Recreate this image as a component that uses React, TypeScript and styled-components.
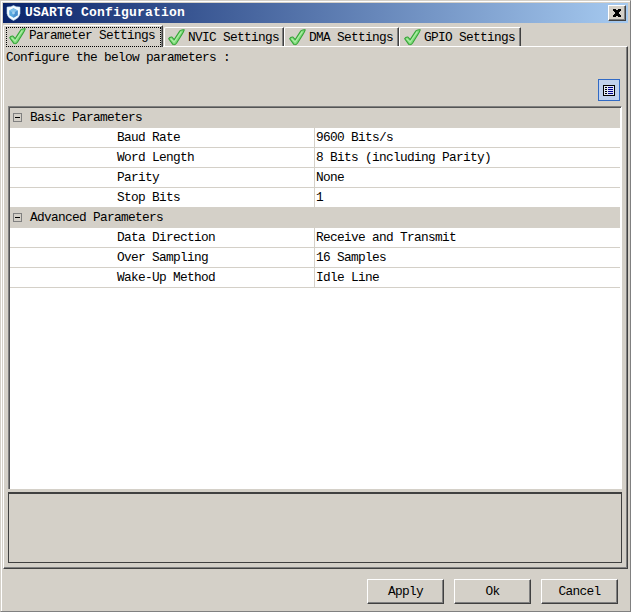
import React from 'react';
import styled, { createGlobalStyle } from 'styled-components';

const face = '#d4d0c8';

const GlobalStyle = createGlobalStyle`
  * { box-sizing: border-box; }
  body {
    margin: 0;
    background: ${face};
    color: #000;
    font-family: 'Liberation Mono', monospace;
    font-size: 12.8px;
    letter-spacing: -0.68px;
    line-height: 20px;
    white-space: pre;
  }
`;

const Window = styled.div`
  display: flex;
  flex-direction: column;
  width: 631px;
  height: 612px;
  background: ${face};
  border: 1px solid;
  border-color: ${face} #808080 #808080 ${face};
  box-shadow: inset 1px 1px 0 #fff;
  padding: 2px;
`;

const TitleBar = styled.header`
  display: flex;
  align-items: center;
  height: 20px;
  flex: none;
  padding: 0 2px 0 3px;
  background: linear-gradient(to right, #0a246a, #a6caf0);
`;

const Title = styled.h1`
  flex: 1;
  margin: 0 0 0 4px;
  color: #fff;
  font-size: 13px;
  line-height: 20px;
  letter-spacing: 0.2px;
  font-weight: bold;
`;

const CloseButton = styled.button`
  display: grid;
  place-items: center;
  width: 18px;
  height: 16px;
  padding: 0 1px 1px 0;
  background: ${face};
  border: 1px solid;
  border-color: #fff #404040 #404040 #fff;
  box-shadow: inset -1px -1px 0 #808080;
`;

const TabStrip = styled.nav`
  display: flex;
  align-items: flex-end;
  height: 23px;
  flex: none;
`;

const Tab = styled.button<{ $width: number; $inset: number; $selected?: boolean }>`
  display: flex;
  align-items: center;
  flex: none;
  position: relative;
  z-index: ${(p) => (p.$selected ? 1 : 0)};
  width: ${(p) => p.$width}px;
  height: ${(p) => (p.$selected ? 22 : 19)}px;
  margin: 0 ${(p) => (p.$selected ? 1 : 0)}px ${(p) => (p.$selected ? -1 : 0)}px 0;
  padding: ${(p) => (p.$selected ? 0 : 1)}px 0 0 ${(p) => p.$inset}px;
  background: ${face};
  border: 1px solid;
  border-color: #fff #404040 transparent #fff;
  border-bottom: 0;
  border-radius: 2px 1px 0 0;
  box-shadow: inset -1px 0 0 #808080;
  color: #000;
  font: inherit;
  letter-spacing: inherit;
`;

const TabContent = styled.span<{ $focused?: boolean }>`
  display: flex;
  align-items: center;
  gap: 3px;
  height: ${(p) => (p.$focused ? 20 : 18)}px;
  width: ${(p) => (p.$focused ? '155px' : 'auto')};
  padding: ${(p) => (p.$focused ? '0 0 1px 2px' : '0')};
  border: ${(p) => (p.$focused ? '1px dotted #000' : '0')};
  line-height: 18px;
`;

const Panel = styled.main`
  display: flex;
  flex-direction: column;
  width: 625px;
  height: 523px;
  flex: none;
  padding: 1px 4px 4px;
  border: 1px solid;
  border-color: #fff #404040 #404040 #fff;
  box-shadow: inset -1px -1px 0 #808080;
`;

const Intro = styled.p`
  height: 21px;
  margin: 0 0 0 -2px;
  line-height: 20px;
`;

const Toolbar = styled.div`
  display: flex;
  justify-content: flex-end;
  height: 37px;
  padding: 10px 3px 0 0;
`;

const ToolButton = styled.button`
  display: grid;
  place-items: center;
  width: 22px;
  height: 22px;
  padding: 0;
  background: #c1d2ee;
  border: 1px solid #316ac5;
`;

const TableFrame = styled.section`
  width: 614px;
  height: 383px;
  flex: none;
  background: #fff;
  border: solid #fff;
  border-width: 1px 1px 0 1px;
  border-top-color: #808080;
  border-left-color: #808080;
  box-shadow: inset 1px 1px 0 #545454;
  padding: 1px 1px 0 1px;
`;

const GroupRow = styled.div`
  display: flex;
  align-items: center;
  gap: 8px;
  height: 20px;
  padding-left: 3px;
  background: ${face};
`;

const Toggle = styled.span`
  display: grid;
  place-items: center;
  width: 9px;
  height: 9px;
  margin-top: -1px;
  border: 1px solid #808080;

  &::before {
    content: '';
    width: 5px;
    height: 1px;
    background: #000;
  }
`;

const ParameterRow = styled.div`
  display: grid;
  grid-template-columns: 305px 1fr;
  height: 20px;
  border-bottom: 1px solid ${face};
`;

const Name = styled.span`
  padding-left: 107px;
  border-right: 1px solid ${face};
`;

const Value = styled.span`
  padding-left: 1px;
`;

const Description = styled.section`
  width: 614px;
  height: 71px;
  flex: none;
  margin-top: 3px;
  border: 1px solid #404040;
  border-top-width: 2px;
`;

const Footer = styled.footer`
  display: flex;
  justify-content: flex-end;
  gap: 10px;
  padding: 10px 10px 0 0;
`;

const PushButton = styled.button`
  width: 77px;
  height: 25px;
  padding: 1px 0 0;
  background: ${face};
  border: 1px solid;
  border-color: #fff #404040 #404040 #fff;
  box-shadow: inset -1px -1px 0 #808080;
  color: #000;
  font: inherit;
  letter-spacing: inherit;
`;

const CheckIcon = () => (
  <svg width="17" height="17" viewBox="0 0 17 17">
    <path
      d="M.7 9.8 Q1.6 7.7 3.9 8 L6.2 10.6 L11.6 2.2 Q13.2 .5 16.2 .9 Q15.5 3.2 14.2 5 L8.6 14 Q6.8 16.6 4.8 15.4 Z"
      fill="#7edb7a"
      stroke="#35a337"
      strokeWidth="1.1"
      strokeLinejoin="round"
    />
    <path d="M2.6 9.6 L6 13.2 L13.3 2.6" fill="none" stroke="#b0eea8" strokeWidth="1.1" />
  </svg>
);

const AppIcon = () => (
  <svg width="15" height="16" viewBox="0 0 15 16">
    <path d="M7.5 .6 Q10 2.2 14 2.1 V8.6 Q13.4 13 7.5 15.6 Q1.6 13 1 8.6 V2.1 Q5 2.2 7.5 .6Z" fill="#f4faff" stroke="#b9dcf2" strokeWidth=".6" />
    <path d="M7.5 3.2 L11.7 5.5 V10.2 L7.5 12.7 L3.3 10.2 V5.5Z" fill="#58a9df" />
    <path d="M7.5 3.2 L11.7 5.5 L7.5 7.9 L3.3 5.5Z" fill="#83c1ea" />
    <path d="M7.5 7.9 L11.7 5.5 V10.2 L7.5 12.7Z" fill="#4a90cf" />
    <circle cx="7.5" cy="8" r="1.4" fill="#a8d4f2" />
  </svg>
);

const CloseIcon = () => (
  <svg width="8" height="8" viewBox="0 0 8 8" shapeRendering="crispEdges">
    <path d="M0 0h3v1h2V0h3v2H7v1H6v2h1v1h1v2H5V7H3v1H0V6h1V5h1V3H1V2H0z" />
  </svg>
);

const ListIcon = () => (
  <svg width="12" height="11" viewBox="0 0 12 11" shapeRendering="crispEdges">
    <rect x=".5" y=".5" width="11" height="10" fill="#e0e8f8" stroke="#000" />
    <path d="M2 2.5h2M2 4.5h2M2 6.5h2M2 8.5h2" stroke="#000" />
    <path d="M5 2.5h5M5 4.5h5M5 6.5h5M5 8.5h5" stroke="#00008c" />
  </svg>
);

const tabs = [
  { label: 'Parameter Settings', width: 160, inset: 2 },
  { label: 'NVIC Settings', width: 120, inset: 3 },
  { label: 'DMA Settings', width: 115, inset: 4 },
  { label: 'GPIO Settings', width: 122, inset: 4 },
];

const groups = [
  {
    title: 'Basic Parameters',
    rows: [
      ['Baud Rate', '9600 Bits/s'],
      ['Word Length', '8 Bits (including Parity)'],
      ['Parity', 'None'],
      ['Stop Bits', '1'],
    ],
  },
  {
    title: 'Advanced Parameters',
    rows: [
      ['Data Direction', 'Receive and Transmit'],
      ['Over Sampling', '16 Samples'],
      ['Wake-Up Method', 'Idle Line'],
    ],
  },
];

export default function App() {
  return (
    <>
      <GlobalStyle />
      <Window>
        <TitleBar>
          <AppIcon />
          <Title>USART6 Configuration</Title>
          <CloseButton aria-label="Close"><CloseIcon /></CloseButton>
        </TitleBar>
        <TabStrip>
          {tabs.map((tab, i) => (
            <Tab key={tab.label} $width={tab.width} $inset={tab.inset} $selected={i === 0}>
              <TabContent $focused={i === 0}>
                <CheckIcon />
                {tab.label}
              </TabContent>
            </Tab>
          ))}
        </TabStrip>
        <Panel>
          <Intro>Configure the below parameters :</Intro>
          <Toolbar>
            <ToolButton aria-label="Show list"><ListIcon /></ToolButton>
          </Toolbar>
          <TableFrame>
            {groups.map((group) => (
              <React.Fragment key={group.title}>
                <GroupRow><Toggle />{group.title}</GroupRow>
                {group.rows.map(([name, value]) => (
                  <ParameterRow key={name}>
                    <Name>{name}</Name>
                    <Value>{value}</Value>
                  </ParameterRow>
                ))}
              </React.Fragment>
            ))}
          </TableFrame>
          <Description />
        </Panel>
        <Footer>
          {['Apply', 'Ok', 'Cancel'].map((label) => (
            <PushButton key={label}>{label}</PushButton>
          ))}
        </Footer>
      </Window>
    </>
  );
}
